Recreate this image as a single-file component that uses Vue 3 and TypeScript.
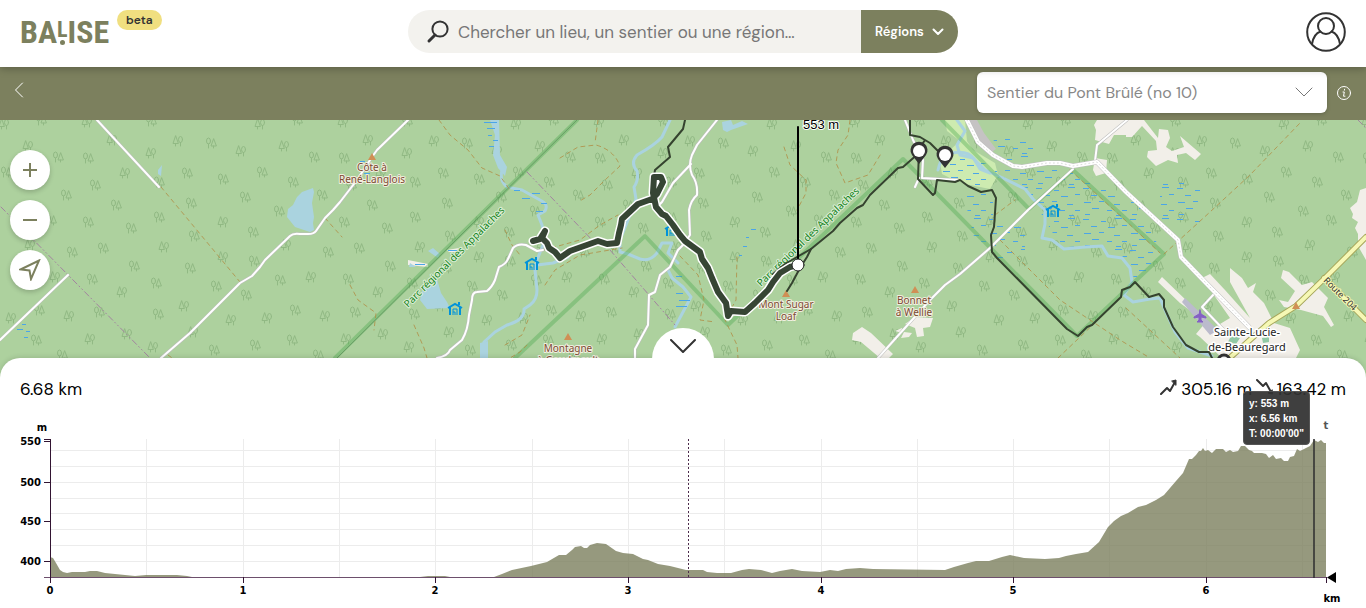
<script setup lang="ts">
import { ref } from 'vue'

type Point = [number, number]
type Tree = [number, number, 'a' | 'b']

const query = ref('')
const trail = ref('pont-brule')

const tiles = [0, 256, 512, 768, 1024, 1280]

const trees: Tree[] = [
  [28, 146, 'a'], [58, 157, 'b'], [88, 158, 'b'], [112, 140, 'a'], [151, 121, 'b'], [87, 122, 'a'], [4, 124, 'a'],
  [41, 120, 'b'], [178, 141, 'a'], [211, 143, 'b'], [151, 153, 'a'], [241, 151, 'a'], [6, 172, 'b'], [125, 173, 'a'],
  [187, 173, 'b'], [95, 185, 'b'], [159, 182, 'b'], [223, 179, 'b'], [37, 182, 'b'], [66, 195, 'b'], [116, 205, 'b'],
  [245, 197, 'b'], [191, 203, 'b'], [23, 211, 'b'], [88, 222, 'b'], [159, 217, 'b'], [223, 222, 'a'], [131, 228, 'b'],
  [253, 232, 'b'], [194, 236, 'b'], [30, 245, 'a'], [103, 248, 'b'], [164, 247, 'a'], [72, 252, 'b'], [223, 257, 'a'],
  [254, 261, 'b'], [134, 266, 'b'], [190, 268, 'b'], [55, 277, 'a'], [92, 279, 'b'], [24, 280, 'b'], [156, 283, 'b'],
  [216, 286, 'b'], [122, 292, 'a'], [246, 295, 'b'], [184, 306, 'a'], [39, 310, 'b'], [99, 312, 'b'], [158, 314, 'b'],
  [69, 316, 'a'], [11, 318, 'a'], [231, 320, 'a'], [193, 332, 'a'], [127, 334, 'a'], [36, 340, 'b'], [90, 339, 'a'],
  [255, 345, 'b'], [153, 347, 'a'], [214, 350, 'b'], [62, 355, 'b'], [51, 220, 'b'],
]

const profile: Point[] = [
  [50, 557], [53, 558], [56, 563], [60, 570], [63, 572], [67, 573], [72, 572], [85, 572], [90, 571], [97, 571],
  [105, 573], [115, 574], [125, 575], [135, 576], [146, 575], [177, 575], [187, 576], [192, 577], [420, 577], [428, 576],
  [445, 576], [450, 577], [494, 577], [502, 574], [512, 570], [531, 566], [547, 562], [559, 555], [566, 555], [572, 550],
  [575, 547], [581, 546], [584, 548], [587, 548], [590, 545], [597, 543], [606, 544], [616, 551], [623, 553], [633, 554],
  [643, 559], [648, 560], [658, 564], [670, 566], [678, 568], [686, 570], [703, 570], [707, 572], [717, 573], [731, 573],
  [742, 570], [749, 569], [761, 570], [772, 573], [780, 571], [792, 569], [802, 571], [820, 572], [830, 570], [838, 571],
  [846, 569], [860, 568], [873, 569], [945, 570], [954, 567], [968, 563], [976, 561], [989, 561], [1002, 557], [1010, 555],
  [1024, 558], [1045, 559], [1059, 558], [1066, 556], [1076, 554], [1088, 552], [1099, 542], [1108, 527], [1114, 521],
  [1121, 516], [1128, 513], [1138, 507], [1146, 505], [1156, 500], [1164, 495], [1176, 481], [1183, 473], [1189, 459],
  [1192, 459], [1196, 455], [1199, 451], [1201, 451], [1203, 448], [1205, 451], [1208, 450], [1212, 453], [1216, 449],
  [1223, 449], [1226, 452], [1230, 450], [1233, 452], [1238, 451], [1241, 446], [1245, 446], [1249, 450], [1252, 451],
  [1254, 453], [1262, 453], [1266, 454], [1269, 458], [1273, 455], [1276, 459], [1281, 458], [1284, 461], [1288, 461],
  [1290, 457], [1294, 456], [1297, 449], [1300, 451], [1306, 448], [1310, 446], [1314, 440], [1318, 442], [1321, 440],
  [1324, 443], [1326, 443],
]
const area = 'M50 577L' + profile.map((p) => p.join(' ')).join('L') + 'L1326 577Z'

const gridX = [146, 243, 339, 435, 532, 628, 724, 821, 917, 1013, 1109, 1206, 1302]
const gridY = [450, 466, 482, 498, 513, 529, 545, 561]
const kilometres = [
  { label: '0', x: 50 }, { label: '1', x: 243 }, { label: '2', x: 435 }, { label: '3', x: 628 },
  { label: '4', x: 821 }, { label: '5', x: 1013 }, { label: '6', x: 1206 },
]
const heights = [
  { label: '550', y: 441 }, { label: '500', y: 482 }, { label: '450', y: 521 }, { label: '400', y: 561 },
]

const mainTrail =
  'M533 241L540 239L545 231L542 238L547 243L549 248L555 252L560 258L570 251L598 241L607 244L617 243L619 233L621 225L622 219L638 204L652 199L657 194L663 182L661 177L654 177L653 193L656 207L662 214L666 216L673 225L680 235L685 241L700 252L702 259L708 268L712 278L718 292L726 303L728 316L731 311L745 312L755 303L768 290L773 282L780 273L790 267L798 265'
const thinTrails = [
  'M685 120L683 129L668 147L670 157L655 170L654 176',
  'M787 291L792 283L800 268L807 257L811 249L833 231L840 223L857 208L863 205L870 195L898 168L903 167L919 153',
  'M773 274L785 264L797 257L811 249',
  'M910 120L910 135L920 137L925 140L930 143L938 151M925 140L919 149L918 179L933 195L935 193L937 180L955 182L960 180L968 186L981 192L992 190L996 198L994 227L991 235L992 252L997 258L1067 329L1078 336L1087 327L1092 325L1121 297L1122 290L1130 287L1135 282L1149 297L1159 294L1164 300L1164 307L1173 327L1186 345L1199 352L1209 352L1213 360',
]
const roads = [
  'M97 120L159 187',
  'M161 358L190 333L213 310L240 283L252 276L260 267L265 260L290 236Q293 233 300 234L308 234Q314 234 316 231L325 218L333 210L340 202L357 180L372 157L377 150L408 120',
  'M0 340L68 275',
  'M437 358Q448 356 450 350L462 340Q468 330 469 315L472 300Q472 292 477 292L487 291Q492 287 495 280L499 267Q506 264 508 259L513 248Q518 243 526 245L537 251L543 250',
  'M635 358V349L648 325L649 295L655 292L660 275L670 267L678 250L683 245L690 235L689 210Q691 200 697 195Q698 183 692 175Q688 165 692 155L697 145L717 120',
  'M691 164L673 183L662 202L656 208',
  'M878 358L930 300L945 285L960 274L990 248L1028 210L1073 169',
  'M905 120L913 140L923 160L922 178L958 180M919 178L915 187',
  'M1095 161L1097 145L1127 120',
  'M1214 294L1202 307L1224 330',
]
const streams = [
  'M503 167Q498 180 507 187L522 190L540 200Q549 204 545 211L538 215L542 225L545 240L537 260L535 270L537 290Q537 300 530 305L524 309Q525 320 507 325L495 332L484 342V358',
  'M537 265L553 263L568 257',
  'M670 120L662 137Q655 145 637 155Q630 163 637 171Q639 180 634 187L636 199L628 220L620 240V252L628 254L640 259Q650 262 657 253L662 243H672L668 253L678 263',
  'M668 270L672 278L683 287L691 297L683 312L675 327',
  'M957 120L965 131L957 145L960 155L973 158L985 170L1003 178L1025 189L1033 199L1045 210L1045 224L1042 238L1052 240L1064 249L1085 247L1102 246L1108 256L1122 258L1130 268L1132 282L1124 295L1133 302L1150 299L1160 298L1165 310L1175 332L1188 348L1212 356',
  'M938 170Q943 150 952 153Q968 150 974 159L980 169L990 173',
]
const brownPaths = [
  'M161 187L240 282', 'M325 218L342 237', 'M168 355L175 360', 'M439 120L450 135L468 150L482 168L500 176L510 190',
  'M560 158L578 147L596 145Q614 150 620 166L605 180L590 195L578 202', 'M598 120L595 143',
  'M544 250L580 240L600 225L618 215', 'M545 285L555 270L580 255L610 250L622 248', 'M527 345L520 352L510 358',
  'M505 230L512 245L520 255', 'M350 285L358 300L376 313L374 330M414 325L424 348L427 358', 'M505 345L522 335L530 315',
  'M784 147L790 165L806 180L806 193L797 210', 'M850 120L848 135L838 150L836 163L845 183L868 175L882 152',
  'M680 256L698 275L704 300L700 320L715 322', 'M737 257L736 300L725 320L737 345L738 358',
  'M1000 240L1060 300L1120 340L1150 358', 'M995 215L1015 200', 'M1058 358L1100 318L1122 295',
  'M1164 254L1210 212L1250 175L1300 123', 'M1126 308L1180 358', 'M1070 170L1125 220L1160 253',
]
const gravelRoad =
  'M967 120L978 142L993 155L1013 166L1022 167L1047 163L1060 163L1073 166L1097 162L1126 192L1178 240L1181 257L1206 283L1249 327'
const mainRoad = 'M1366 237L1326 277L1296 306L1269 323L1225 362M1324 278L1366 320'
const shelters: Point[] = [[532, 264], [455, 309], [672, 230], [1053, 211]]
const pins: Point[] = [[919, 151], [945, 155]]
const peaks: Point[] = [[372, 157], [568, 337], [786, 294], [915, 290], [1296, 306]]
</script>

<template>
  <div class="page">
    <header class="top">
      <div class="brand">
        <a class="logo" href="#" aria-label="Balise">
          <span>BA</span><span class="logo-l">L</span><span>ISE</span>
        </a>
        <span class="beta">beta</span>
      </div>
      <form class="search" @submit.prevent>
        <label class="search-field">
          <svg width="24" height="24" viewBox="0 0 24 24" aria-label="Recherche">
            <circle cx="14" cy="9" r="7.6" /><path d="M9 15L3 21" class="handle" />
          </svg>
          <input v-model="query" type="text" placeholder="Chercher un lieu, un sentier ou une région..." />
        </label>
        <button class="regions" type="button">
          Régions
          <svg width="12" height="8" viewBox="0 0 12 8"><path d="M1.5 1.5L6 6L10.500 1.500" /></svg>
        </button>
      </form>
      <button class="account" type="button" aria-label="Compte">
        <svg width="40" height="40" viewBox="0 0 40 40">
          <circle cx="20" cy="20" r="18.800" /><circle cx="20" cy="14" r="8" />
          <path d="M6 32C7 26 10 21 14.500 19.500M34 32C33 26 30 21 25.500 19.500" />
        </svg>
      </button>
    </header>

    <nav class="bar">
      <button class="back" type="button" aria-label="Retour">
        <svg width="10" height="16" viewBox="0 0 10 16"><path d="M8.500 1L1.500 8L8.500 15" /></svg>
      </button>
      <label class="picker">
        <select v-model="trail" aria-label="Sentier">
          <option value="pont-brule">Sentier du Pont Brûlé (no 10)</option>
        </select>
        <svg width="18" height="10" viewBox="0 0 18 10"><path d="M1 1L9 9L17 1" /></svg>
      </label>
      <button class="info" type="button" aria-label="Informations">
        <svg width="16" height="16" viewBox="0 0 16 16">
          <circle cx="8" cy="8" r="6.500" /><path d="M8.600 4.200L8.400 5.200M7 7H8.300L7.500 11.200H9" />
        </svg>
      </button>
    </nav>

    <section class="map" aria-label="Carte">
      <svg class="canvas" viewBox="0 120 1366 258" preserveAspectRatio="xMidYMin slice">
        <defs>
          <g id="tree-a">
            <path d="M-2.500 -5L-5 2.500H0ZM-2.500 2.500V5M2.500 1.500V5" /><ellipse cx="2.500" cy="-1.500" rx="2" ry="3" />
          </g>
          <g id="tree-b">
            <path d="M2.500 -4L0 3H5ZM2.500 3V5M-2.500 1V5" /><ellipse cx="-2.500" cy="-2" rx="2" ry="3" />
          </g>
          <pattern id="marsh" width="47" height="31" patternUnits="userSpaceOnUse">
            <path d="M2 2.500H8M20 4.500H25M34 1.500H41M10 9.500H16M27 10.500H34M41 8.500H46M3 16.500H10M18 15.500H23M33 18.500H39M11 22.500H18M26 24.500H31M41 24.500H46M4 28.500H9M35 29.500H40" />
          </pattern>
        </defs>
        <rect class="forest" y="120" width="1366" height="258" />
        <g class="trees">
          <g v-for="t in tiles" :key="t" :transform="`translate(${t} 0)`">
            <use v-for="(tree, i) in trees" :key="i" :href="`#tree-${tree[2]}`" :x="tree[0]" :y="tree[1]" />
          </g>
        </g>

        <g class="field">
          <path d="M1097 120H1142L1134 135L1114 135L1109 144L1095 140L1096 130L1094 125Z" />
          <path d="M1126 120H1144L1158 138L1159 129L1168 130L1170 138L1166 147L1172 151L1184 147L1180 136L1201 154L1195 160L1186 153L1177 155L1178 163L1168 160L1156 166L1147 157L1148 151L1157 150L1156 141L1142 126L1132 137H1126Z" />
          <path d="M1095 158L1107 160L1106 173L1096 176L1093 170Z" />
          <path d="M1366 188L1360 190L1357 202L1350 208L1353 214L1352 218L1358 222L1355 228L1358 234V246L1366 260Z" />
          <path d="M1230 268L1242 278L1248 288L1256 283L1253 292L1264 303L1274 323L1290 328L1300 350L1296 358H1222L1200 337L1196 334L1206 322L1180 303L1158 282L1162 277L1188 302L1210 330L1230 318L1202 278L1210 274L1225 290L1250 318L1240 300L1230 282Z" />
          <path d="M1283 270L1289 272L1302 285L1312 282L1328 298L1324 307L1334 325L1331 327L1323 316L1301 310L1284 307L1279 300L1288 302L1295 291L1281 278Z" />
          <path d="M853 333L862 327L871 333L893 354L889 358H880L861 342L852 340Z" />
          <path d="M915 317L933 318L930 327L923 328L924 336L917 337L915 328L905 324ZM904 332L912 333L909 337L901 338ZM895 331L902 328V333Z" />
          <path d="M408 260L428 264V267L408 265ZM447 250L459 248L456 252L449 252Z" />
        </g>
        <path class="meadow" d="M945 120H965L967 141L973 150L995 163L998 175L990 189L970 185L952 179L942 174L940 162L950 150L960 141L947 131Z" />
        <path class="quarry" d="M969 120H977L984 133L996 149L990 153L982 148L974 136Z" />
        <path class="runway" d="M1185 298L1218 330L1210 335L1182 302Z" />
        <g class="water">
          <path d="M313 188L302 192L297 197L293 205L288 209L287 217L295 227L310 232L314 230L313 223L314 217L312 203L314 192ZM162 165L158 170V174L161 176Z" />
          <path d="M437 279L428 283L423 287L420 300L427 309L450 308L447 302L441 293ZM428 251L433 248L440 254L438 258Z" />
          <path d="M410 263L416 267H409ZM722 122L731 120L733 125L742 121L748 124L731 130L727 132L723 130Z" />
          <path d="M490 120H499L500 155L507 167L505 176L498 168L493 155L495 135Z" />
          <path d="M480 343L488 341V358H480Z" />
        </g>
        <path class="marsh" d="M993 138H1035V163H1000ZM1033 168H1075L1140 205L1160 250L1138 285L1120 252L1060 245L1042 215L1030 195L995 180V165ZM965 190H993V245L975 240L968 215ZM990 225H1025V258H998ZM944 150L990 165L985 188L942 176ZM1160 180H1200V222H1160Z" />
        <path v-for="(d, i) in streams" :key="`s${i}`" class="stream" :d="d" />
        <path class="reeds" d="M484 122.500H497M487 128.500H495M488 135.500H492M493 140.500H498M489 146.500H494M514 190.500H520M522 198.500H530M532 193.500H540M541 203.500H547M536 211.500H543M448 250.500H457M415 264.500H425M676 276.500H682M676 293.500H683M679 300.500H690M676 306.500H687M751 229.500H756M746 237.500H749M743 246.500H747M739 255.500H742M22 324.500H26M17 329.500H23M26 331.500H30M24 337.500H28M360 161.500H365M364 173.500H370" />

        <path class="park" d="M577 120L335 358M515 358L645 236L728 325L903 159L1077 336L1164 254L1073 170L1029 209L942 120" />
        <path class="park-edge" d="M577 120L337 358" />
        <path class="limit" d="M1 207L150 358M527 172L595 243M610 250L675 325M1358 120L1366 128" />
        <path v-for="(d, i) in brownPaths" :key="`p${i}`" class="path" :d="d" />
        <path v-for="(d, i) in roads" :key="`rc${i}`" class="road-case" :d="d" />
        <path v-for="(d, i) in roads" :key="`r${i}`" class="road" :d="d" />
        <path class="street-case" :d="gravelRoad" />
        <path class="street" :d="gravelRoad" />
        <path class="gravel" :d="gravelRoad" />
        <path class="route-case" :d="mainRoad" />
        <path class="route" :d="mainRoad" />
        <path class="town" d="M1232 334L1240 338L1236 344L1228 342ZM1262 338L1269 337V342L1263 343Z" />

        <g class="park-label">
          <text transform="translate(408 308) rotate(-45)">Parc régional des Appalaches</text>
          <text transform="translate(761 287) rotate(-44)">Parc régional des Appalaches</text>
        </g>
        <path v-for="([x, y], i) in peaks" :key="`k${i}`" class="peak" :d="`M${x} ${y - 4}l4 7h-8z`" />
        <g v-for="([x, y], i) in shelters" :key="`h${i}`" class="shelter" :transform="`translate(${x} ${y})`">
          <path d="M-7 -1L0 -5L7 -1M-5 -2V6M5 -2V6M4 -4V-7" /><path class="room" d="M-2 6V0H2V6M-2 3H0V6" />
        </g>
        <g class="place">
          <text x="372" y="171">Côte à</text><text x="372" y="183">René-Langlois</text>
          <text x="568" y="352">Montagne</text><text x="568" y="364">à Goudreault</text>
          <text x="786" y="308">Mont Sugar</text><text x="786" y="320">Loaf</text>
          <text x="914" y="304">Bonnet</text><text x="914" y="316">à Wellie</text>
        </g>
        <path class="plane" d="M1200 310L1201 314L1206 317V318L1201 317V320L1203 322H1197L1199 320V317L1194 318V317L1199 314Z" />
        <g class="village">
          <text x="1247" y="336">Sainte-Lucie-</text><text x="1247" y="351">de-Beauregard</text>
        </g>
        <text class="route-label" transform="translate(1323 281) rotate(45)">Route 204</text>

        <path v-for="(d, i) in thinTrails" :key="`t${i}`" class="thin" :d="d" />
        <path class="trail-case" :d="mainTrail" />
        <path class="trail" :d="mainTrail" />
        <g v-for="([x, y], i) in pins" :key="`m${i}`" class="pin" :transform="`translate(${x} ${y})`">
          <path d="M0 13L-7 4A8.500 8.500 0 1 1 7 4Z" /><circle r="6" />
        </g>
        <circle class="ring" cx="1224" cy="361" r="6" />
        <path class="stem" d="M798 127V262" />
        <circle class="cursor" cx="798" cy="265" r="6" />
        <text class="altitude" x="803" y="129">553 m</text>
      </svg>

      <div class="tools">
        <button type="button" aria-label="Zoom avant">
          <svg width="20" height="20" viewBox="0 0 20 20"><path d="M10 3V17M3 10H17" /></svg>
        </button>
        <button type="button" aria-label="Zoom arrière">
          <svg width="20" height="20" viewBox="0 0 20 20"><path d="M3 10H17" /></svg>
        </button>
        <button type="button" aria-label="Ma position">
          <svg width="22" height="22" viewBox="0 0 22 22"><path d="M1.500 10.500L20 1.500L12 20L10.500 11.500Z" /></svg>
        </button>
      </div>
    </section>

    <section class="panel">
      <button class="fold" type="button" aria-label="Replier le profil">
        <svg width="26" height="14" viewBox="0 0 26 14"><path d="M1 1L13 13L25 1" /></svg>
      </button>
      <div class="stats">
        <span class="distance">6.68 km</span>
        <svg class="trend" width="17" height="16" viewBox="0 0 17 16">
          <path d="M1 15L7 9L10 12L15 3" /><path class="tip" d="M12 2L16 1L16 6Z" />
        </svg>
        <span>305.16 m</span>
        <svg class="trend" width="17" height="16" viewBox="0 0 17 16">
          <path d="M1 1L7 7L10 4L15 13" /><path class="tip" d="M16 15L12 14L16 11Z" />
        </svg>
        <span>163.42 m</span>
      </div>
      <div class="chart">
        <svg viewBox="0 420 1366 188" role="img" aria-label="Profil altimétrique">
          <g class="grid">
            <path v-for="x in gridX" :key="x" :d="`M${x}.500 439V577`" />
            <path v-for="y in gridY" :key="y" :d="`M50 ${y}.500H1326`" />
          </g>
          <path class="area" :d="area" />
          <path class="axis-soft" d="M44 577.500H1326" />
          <path class="axis" d="M50.500 439V582" />
          <g class="ticks">
            <path v-for="k in kilometres" :key="k.x" :d="`M${k.x}.500 577V583`" />
            <path v-for="h in heights" :key="h.y" :d="`M44 ${h.y}.500H50`" />
            <path d="M44 439.500H50M1326.500 577V583" />
          </g>
          <path class="middle" d="M688.500 439V577" />
          <path class="now" d="M1314 439V578" />
          <path d="M1327 577.500L1336 572V583Z" />
          <g class="labels">
            <text v-for="k in kilometres" :key="k.label" :x="k.x" y="594" text-anchor="middle">{{ k.label }}</text>
            <text v-for="h in heights" :key="h.label" x="41" :y="h.y + 4" text-anchor="end">{{ h.label }}</text>
            <text x="42" y="431" text-anchor="middle">m</text>
            <text x="1332" y="602" text-anchor="middle">km</text>
            <text class="time" x="1326" y="429" text-anchor="middle">t</text>
          </g>
        </svg>
        <div class="tip-box"><div>y: 553 m</div><div>x: 6.56 km</div><div>T: 00:00'00"</div></div>
      </div>
    </section>
  </div>
</template>

<style>
body { margin: 0; background: #fff; }
</style>

<style scoped>
.page { display: flex; flex-direction: column; min-height: 100vh; font-family: "DM Sans", Inter, sans-serif; color: #000; }
button { border: 0; padding: 0; background: none; font: inherit; cursor: pointer; }
svg { display: block; flex: none; fill: none; stroke-linecap: round; stroke-linejoin: round; }

.top { display: grid; grid-template-columns: 1fr minmax(0, 550px) 1fr; align-items: center; height: 67px; padding: 0 20px; background: #fff; box-shadow: 0 2px 8px rgba(0, 0, 0, .25); position: relative; z-index: 2; box-sizing: border-box; }
.brand { display: flex; align-items: flex-start; gap: 9px; height: 47px; }
.logo { display: flex; width: 88px; height: 44px; align-items: center; font: 700 32px/44px "Liberation Sans Narrow", "Roboto Condensed", "Liberation Sans", sans-serif; color: #7c805e; text-decoration: none; }
.logo-l { display: flex; flex-direction: column; align-items: center; font-size: 22px; line-height: 20px; }
.logo-l::after { content: ""; width: 5px; height: 5px; border-radius: 50%; background: #7c805e; }
.beta { padding: 0 9px; border-radius: 10px; background: #f0df80; color: #333; font-size: 12px; font-weight: 600; line-height: 20px; }
.search { display: flex; height: 43px; margin-bottom: 4px; border-radius: 22px; overflow: hidden; background: #f3f2ee; }
.search-field { display: flex; flex: 1; align-items: center; gap: 8px; min-width: 0; padding-left: 18px; stroke: #333; stroke-width: 2; }
.search-field .handle { stroke-width: 3; }
.search-field input { flex: 1; min-width: 0; border: 0; outline: 0; padding: 0; background: none; font: 400 17px/24px "DM Sans", Inter, sans-serif; color: #333; }
.search-field input::placeholder { color: #777; opacity: 1; }
.regions { display: flex; align-items: center; justify-content: center; gap: 8px; width: 97px; background: #7c805e; color: #fff; font-size: 13px; font-weight: 600; }
.regions svg { stroke: #fff; stroke-width: 2; }
.account { justify-self: end; stroke: #333; stroke-width: 2; margin-bottom: 3px; }

.bar { display: flex; align-items: center; justify-content: flex-end; gap: 9px; height: 53px; box-sizing: border-box; padding: 0 14px 2px; background: #7c805e; }
.back { margin-right: auto; margin-bottom: 6px; stroke: #fff; stroke-width: 1; }
.picker { position: relative; width: 350px; max-width: 75%; }
.picker select { display: block; width: 100%; height: 41px; padding: 0 40px 0 10px; border: 0; border-radius: 6px; appearance: none; background: #fff; color: #888; font: 400 16px/24px "DM Sans", Inter, sans-serif; box-shadow: 0 1px 4px rgba(0, 0, 0, .2); }
.picker svg { position: absolute; right: 14px; top: 15px; stroke: #777; stroke-width: 1; pointer-events: none; }
.info { stroke: #fff; stroke-width: 1; }

.map { position: relative; flex: 1; min-height: 238px; background: #add19e; }
.canvas { position: absolute; inset: 0; width: 100%; height: calc(100% + 20px); overflow: hidden; }
.forest { fill: #add19e; }
.trees { stroke: #91b984; stroke-width: 1; }
.field { fill: #f2efe9; }
.meadow { fill: #cdebb0; }
.quarry { fill: #c5c3c3; }
.runway { fill: #bbbbcc; }
.town { fill: #90c9a5; }
.water { fill: #aad3df; }
.stream { stroke: #aad3df; stroke-width: 3; }
#marsh path, .reeds { stroke: #4aa5e8; stroke-width: 1; stroke-linecap: butt; }
.marsh { fill: url(#marsh); }
.park { stroke: #49a84c; stroke-opacity: .38; stroke-width: 4; }
.park-edge { stroke: #4a7a4b; stroke-opacity: .5; stroke-width: 1; }
.limit { stroke: #a383a0; stroke-width: 1; stroke-dasharray: 6 3 1 3 1 3; }
.path { stroke: #b08d45; stroke-opacity: .8; stroke-width: 1; stroke-dasharray: 4 4; }
.road-case { stroke: #bdbdbd; stroke-width: 3; }
.road { stroke: #fff; stroke-width: 2; }
.street-case { stroke: #bdbdbd; stroke-width: 5; }
.street { stroke: #fff; stroke-width: 4; }
.gravel { stroke: #dcdcdc; stroke-width: 1; stroke-dasharray: 1 3; }
.route-case { stroke: #a6a65a; stroke-width: 6; }
.route { stroke: #f6f8b5; stroke-width: 4; }
.park-label { fill: #14831b; stroke: #dcefd6; stroke-width: 2; paint-order: stroke; font: 400 10px "Noto Sans", sans-serif; }
.peak { fill: #d08f55; }
.shelter { stroke: #0092da; stroke-width: 2; stroke-linecap: butt; stroke-linejoin: miter; }
.room { stroke-width: 1; }
.place { fill: #7c4a31; stroke: #f0efe0; stroke-width: 2; paint-order: stroke; text-anchor: middle; font: 400 10px "Noto Sans", sans-serif; }
.plane { fill: #8461c4; stroke: #8461c4; }
.village { fill: #222; stroke: #fff; stroke-width: 3; paint-order: stroke; text-anchor: middle; font: 400 11px "Noto Sans", sans-serif; }
.route-label { fill: #333; stroke: #f6f8b5; stroke-width: 2; paint-order: stroke; font: 400 9px "Noto Sans", sans-serif; }
.thin { stroke: #35432f; stroke-width: 2; }
.trail-case { stroke: #fff; stroke-width: 9; }
.trail { stroke: #364534; stroke-width: 6; }
.pin { fill: #333; }
.pin circle { fill: #fff; }
.ring { fill: #fff; stroke: #333; stroke-width: 3; }
.stem { stroke: #000; stroke-width: 2; }
.cursor { fill: #fff; stroke: #222; stroke-width: 1; }
.altitude { fill: #000; stroke: #fff; stroke-width: 2; paint-order: stroke; font: 400 13px "Liberation Sans", sans-serif; }

.tools { position: absolute; left: 10px; top: 30px; display: flex; flex-direction: column; gap: 10px; }
.tools button { display: grid; place-items: center; width: 40px; height: 40px; border-radius: 50%; background: #fff; box-shadow: 0 2px 5px rgba(0, 0, 0, .2); stroke: #7c805e; stroke-width: 2; }
.tools svg { stroke-linecap: butt; stroke-linejoin: miter; }

.panel { position: relative; padding-top: 19px; border-radius: 20px 20px 0 0; background: #fff; box-shadow: 0 -1px 5px rgba(0, 0, 0, .12); }
.fold { position: absolute; left: 50%; top: -30px; display: flex; justify-content: center; width: 62px; height: 31px; margin-left: -31px; padding-top: 11px; box-sizing: border-box; border-radius: 31px 31px 0 0; background: #fff; stroke: #333; stroke-width: 2; }
.stats { display: flex; align-items: center; height: 24px; padding: 0 20px; gap: 4px; font-size: 17px; line-height: 24px; }
.distance { margin-right: auto; }
.trend { stroke: #333; stroke-width: 2; margin-bottom: 4px; }
.tip { fill: #333; stroke-width: 1; }
.chart { position: relative; margin-top: 19px; }
.chart > svg { width: 100%; height: auto; fill: #000; stroke-linecap: butt; }
.grid { stroke: #ececec; stroke-width: 1; }
.area { fill: #7c805e; fill-opacity: .8; }
.axis-soft { stroke: #6d4f6c; stroke-width: 1; }
.axis, .ticks { stroke: #321432; stroke-width: 1; }
.middle { stroke: #4c2c4b; stroke-width: 1; stroke-dasharray: 2 2; }
.now { stroke: #333; stroke-opacity: .8; stroke-width: 2; }
.labels { font: 700 10px "DejaVu Sans", sans-serif; }
.time { fill: #555; }
.tip-box { position: absolute; right: 56px; top: -29px; padding: 4px 5px; border: 1px solid #555; border-radius: 4px; background: rgba(48, 48, 48, .93); color: #fff; font: 700 10px/15px "Liberation Sans", Arial, sans-serif; box-sizing: border-box; width: 67px; height: 54px; white-space: nowrap; }
</style>
